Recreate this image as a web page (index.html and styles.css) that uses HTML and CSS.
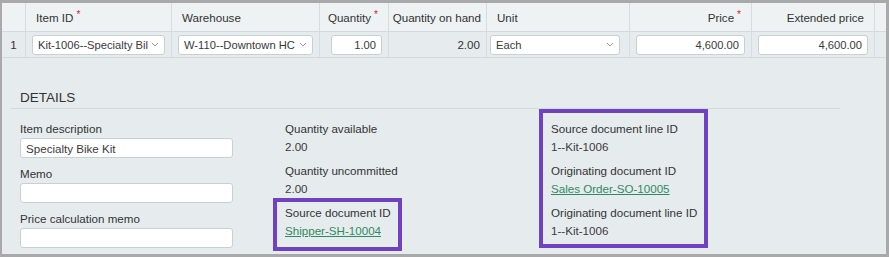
FILE: index.html
```html
<!DOCTYPE html>
<html lang="en">
<head>
  <meta charset="UTF-8">
  <title>Line details</title>
  <link rel="stylesheet" href="styles.css">
</head>
<body>
  <div class="frame">
    <div class="grid head">
      <div class="cell"></div>
      <div class="cell">Item ID <span class="req">*</span></div>
      <div class="cell">Warehouse</div>
      <div class="cell right">Quantity <span class="req">*</span></div>
      <div class="cell right tight">Quantity on hand</div>
      <div class="cell">Unit</div>
      <div class="cell right">Price <span class="req">*</span></div>
      <div class="cell right">Extended price</div>
      <div class="cell"></div>
    </div>
    <div class="grid row">
      <div class="cell num">1</div>
      <div class="cell"><div class="input select"><span class="val">Kit-1006--Specialty Bil</span><svg class="chev" width="8" height="5" viewBox="0 0 8 5"><path d="M1 1l3 3 3-3" fill="none" stroke="#999" stroke-width="1"/></svg></div></div>
      <div class="cell"><div class="input select"><span class="val">W-110--Downtown HC</span><svg class="chev" width="8" height="5" viewBox="0 0 8 5"><path d="M1 1l3 3 3-3" fill="none" stroke="#999" stroke-width="1"/></svg></div></div>
      <div class="cell"><div class="input num-in qty">1.00</div></div>
      <div class="cell right onhand">2.00</div>
      <div class="cell"><div class="input select unit"><span class="val">Each</span><svg class="chev" width="8" height="5" viewBox="0 0 8 5"><path d="M1 1l3 3 3-3" fill="none" stroke="#999" stroke-width="1"/></svg></div></div>
      <div class="cell"><div class="input num-in">4,600.00</div></div>
      <div class="cell"><div class="input num-in">4,600.00</div></div>
      <div class="cell"></div>
    </div>

    <div class="details">
      <div class="details-title">DETAILS</div>
      <div class="details-cols">
        <div class="col col-1">
          <div class="field">
            <div class="label">Item description</div>
            <div class="input text">Specialty Bike Kit</div>
          </div>
          <div class="field">
            <div class="label">Memo</div>
            <div class="input text"></div>
          </div>
          <div class="field">
            <div class="label">Price calculation memo</div>
            <div class="input text"></div>
          </div>
        </div>
        <div class="col col-2">
          <div class="info">
            <div class="label">Quantity available</div>
            <div class="value">2.00</div>
          </div>
          <div class="info">
            <div class="label">Quantity uncommitted</div>
            <div class="value">2.00</div>
          </div>
          <div class="mark mark-1">
            <div class="info">
              <div class="label">Source document ID</div>
              <a class="value link" href="#">Shipper-SH-10004</a>
            </div>
          </div>
        </div>
        <div class="col col-3">
          <div class="mark mark-2">
            <div class="info">
              <div class="label">Source document line ID</div>
              <div class="value">1--Kit-1006</div>
            </div>
            <div class="info">
              <div class="label">Originating document ID</div>
              <a class="value link" href="#">Sales Order-SO-10005</a>
            </div>
            <div class="info">
              <div class="label">Originating document line ID</div>
              <div class="value">1--Kit-1006</div>
            </div>
          </div>
        </div>
      </div>
    </div>
  </div>
</body>
</html>
```

FILE: styles.css
```css
* { box-sizing: border-box; }
body {
  margin: 0;
  font-family: "Liberation Sans", Arial, sans-serif;
  font-size: 11.6px;
  color: #333;
  background: #fff;
}

.frame {
  width: 889px;
  height: 257px;
  border: 3px solid #a9a9a9;
  border-left-width: 2px;
  background: #e6ecee;
  overflow: hidden;
}

.grid {
  display: grid;
  grid-template-columns: 24px 146px 148px 69px 98px 143px 122px 123px 1fr;
}

.head {
  height: 29px;
  background: #eef2f3;
  border-bottom: 1px solid #d3dadd;
}

.row {
  height: 26px;
  background: #e6ecee;
  border-bottom: 1px solid #d3dadd;
}

.cell {
  display: flex;
  align-items: center;
  padding: 0 6px;
  border-right: 1px solid #d6dde0;
  color: #333;
  white-space: nowrap;
}

.head .cell { padding: 0 10px; }
.head .cell.tight { padding: 0 5px; }
.head .cell.right, .cell.right { justify-content: flex-end; }
.head .cell:last-child { border-right: none; }

.req {
  color: #d0242b;
  font-size: 10px;
  align-self: flex-start;
  margin-top: 6px;
  margin-left: 3px;
}

.num { justify-content: center; padding: 0; }
.onhand { padding-right: 6px; }

.input {
  background: #fff;
  border: 1px solid #c9d0d3;
  border-radius: 3px;
  height: 20px;
  display: flex;
  align-items: center;
  padding: 0 5px;
  color: #3a3a3a;
  width: 100%;
}

.row .input { font-size: 11.2px; }
.select { justify-content: space-between; }
.select .val { white-space: nowrap; }
.chev { flex: none; margin-left: 3px; }

.num-in { justify-content: flex-end; }
.qty { margin-left: 5px; }
.unit { margin-left: -3px; }

.details {
  padding: 32px 46px 0 9px;
}

.details-title {
  font-size: 13.5px;
  color: #333;
  padding: 0 0 3px 9px;
  border-bottom: 1px solid #d3dadd;
}

.details-cols {
  display: flex;
  padding-left: 9px;
  padding-top: 10px;
}

.col-1 { width: 213px; }
.col-2 { width: 266px; margin-left: 52px; }

.field { height: 45px; padding-top: 3px; }
.field .label { margin-bottom: 3px; }
.field .input { height: 20px; }

.label {
  color: #333;
  line-height: 13px;
}

.info { height: 42px; padding-top: 3px; }
.value { display: block; margin-top: 5px; line-height: 13px; color: #3a3a3a; }
.value.link {
  color: #2f8a5f;
  text-decoration: underline;
}

.mark {
  border: 4px solid #7042c3;
}

.mark-1 {
  width: 129px;
  margin: -5px 0 0 -12px;
  padding: 1px 0 0 8px;
  height: 53px;
}

.mark-2 {
  width: 169px;
  margin: -10px 0 0 -12px;
  padding: 6px 0 0 8px;
  height: 139px;
}
```
